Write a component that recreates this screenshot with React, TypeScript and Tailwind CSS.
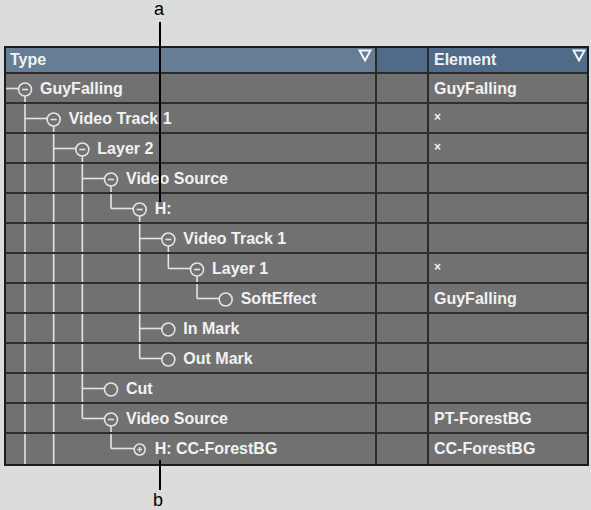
type Node = {
  label: string;
  level: number;
  guides: number[];
  last: boolean;
  icon: "minus" | "plus" | "leaf";
  element?: string;
};

const rows: Node[] = [
  { label: "GuyFalling", level: 0, guides: [], last: false, icon: "minus", element: "GuyFalling" },
  { label: "Video Track 1", level: 1, guides: [], last: false, icon: "minus", element: "×" },
  { label: "Layer 2", level: 2, guides: [0], last: false, icon: "minus", element: "×" },
  { label: "Video Source", level: 3, guides: [0, 1], last: false, icon: "minus" },
  { label: "H:", level: 4, guides: [0, 1, 2], last: true, icon: "minus" },
  { label: "Video Track 1", level: 5, guides: [0, 1, 2], last: false, icon: "minus" },
  { label: "Layer 1", level: 6, guides: [0, 1, 2, 4], last: true, icon: "minus", element: "×" },
  { label: "SoftEffect", level: 7, guides: [0, 1, 2, 4], last: true, icon: "leaf", element: "GuyFalling" },
  { label: "In Mark", level: 5, guides: [0, 1, 2], last: false, icon: "leaf" },
  { label: "Out Mark", level: 5, guides: [0, 1, 2], last: true, icon: "leaf" },
  { label: "Cut", level: 3, guides: [0, 1], last: false, icon: "leaf" },
  { label: "Video Source", level: 3, guides: [0, 1], last: true, icon: "minus", element: "PT-ForestBG" },
  { label: "H: CC-ForestBG", level: 4, guides: [0, 1], last: true, icon: "plus", element: "CC-ForestBG" },
];

const STEP = 28.67;
const gx = (k: number) => 19 + STEP * k;
const MID = 14.5;
const LINE = "#e4e4e4";

// tree connectors for one row
const Branch = ({ node, h }: { node: Node; h: number }) => {
  const cx = gx(node.level);
  const r = node.icon === "plus" ? 5.5 : 6.5;
  const w = cx + 15;
  return (
    <svg width={w} height={h} className="shrink-0">
      {node.guides.map((k) => (
        <line key={k} x1={gx(k)} y1={0} x2={gx(k)} y2={h} stroke={LINE} strokeWidth={1.6} />
      ))}
      {node.level === 0 ? (
        <line x1={0} y1={MID} x2={cx - r} y2={MID} stroke={LINE} strokeWidth={1.6} />
      ) : (
        <>
          <line
            x1={gx(node.level - 1)}
            y1={0}
            x2={gx(node.level - 1)}
            y2={node.last ? MID : h}
            stroke={LINE}
            strokeWidth={1.6}
          />
          <line x1={gx(node.level - 1)} y1={MID} x2={cx - r} y2={MID} stroke={LINE} strokeWidth={1.6} />
        </>
      )}
      <circle cx={cx} cy={MID + 1} r={r} fill="none" stroke={LINE} strokeWidth={1.6} />
      {node.icon === "minus" && (
        <>
          <line x1={cx - 3} y1={MID + 1} x2={cx + 3} y2={MID + 1} stroke={LINE} strokeWidth={1.6} />
          <line x1={cx} y1={MID + 1 + r} x2={cx} y2={h} stroke={LINE} strokeWidth={1.6} />
        </>
      )}
      {node.icon === "plus" && (
        <>
          <line x1={cx - 2.5} y1={MID + 1} x2={cx + 2.5} y2={MID + 1} stroke={LINE} strokeWidth={1.4} />
          <line x1={cx} y1={MID - 1.5} x2={cx} y2={MID + 3.5} stroke={LINE} strokeWidth={1.4} />
        </>
      )}
    </svg>
  );
};

const SortArrow = () => (
  <svg width="14" height="13" viewBox="0 0 14 13" className="shrink-0">
    <polygon points="1.5,1.5 12.5,1.5 7,11.5" fill="none" stroke="#f4f4f4" strokeWidth="2" />
  </svg>
);

export default function App() {
  return (
    <div
      className="relative w-[591px] h-[510px] bg-[#dcdcdc] overflow-hidden"
      style={{ fontFamily: '"Liberation Sans", Arial, sans-serif' }}
    >
      {/* callout a */}
      <div className="absolute left-[154px] top-[0px] text-[18px] text-black leading-none">a</div>
      <div className="absolute left-[159px] top-[22px] w-[2px] h-[180px] bg-black z-10" />

      <div className="pt-[46px] pl-[4px]">
        <div className="w-[585px] border-2 border-[#1c1c1c] bg-[#717171] text-[16px] font-bold text-[#f2f2f2]">
          {/* header */}
          <div className="flex h-[26px] border-b-2 border-[#2a2a2a]">
            <div className="w-[371px] bg-[#657d95] border-r-2 border-[#2a2a2a] flex justify-between pl-[4px] pr-[3px]">
              <span className="leading-[24px]">Type</span>
              <div className="pt-[1px]">
                <SortArrow />
              </div>
            </div>
            <div className="w-[52px] bg-[#506a89] border-r-2 border-[#2a2a2a]" />
            <div className="flex-1 bg-[#506a89] flex justify-between pl-[5px] pr-[1px]">
              <span className="leading-[24px]">Element</span>
              <div className="pt-[1px]">
                <SortArrow />
              </div>
            </div>
          </div>

          {/* rows */}
          {rows.map((node, i) => {
            const isEnd = i === rows.length - 1;
            return (
              <div
                key={i}
                className={
                  isEnd ? "flex h-[30px]" : "flex h-[30px] border-b-2 border-[#2e2e2e]"
                }
              >
                <div className="w-[371px] border-r-2 border-[#2a2a2a] flex items-start">
                  <Branch node={node} h={isEnd ? 30 : 28} />
                  <span className="leading-[30px] whitespace-nowrap">{node.label}</span>
                </div>
                <div className="w-[52px] border-r-2 border-[#2a2a2a]" />
                <div className="flex-1 flex pl-[5px]">
                  {node.element === "×" ? (
                    <span className="text-[12px] leading-none pt-[7px]">×</span>
                  ) : (
                    <span className="leading-[30px]">{node.element}</span>
                  )}
                </div>
              </div>
            );
          })}
        </div>
      </div>

      {/* callout b */}
      <div className="absolute left-[159px] top-[460px] w-[2px] h-[30px] bg-black z-10" />
      <div className="absolute left-[153px] top-[491px] text-[18px] text-black leading-none">b</div>
    </div>
  );
}
